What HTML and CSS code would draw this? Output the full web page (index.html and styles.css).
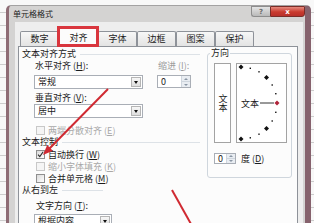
FILE: index.html
```html
<!DOCTYPE html>
<html lang="zh-CN">
<head>
<meta charset="utf-8">
<title>单元格格式</title>
<link rel="stylesheet" href="styles.css">
</head>
<body>
<div class="screen">
  <div class="sheet-left"></div>
  <div class="dialog">
    <div class="titlebar">
      <span class="title">单元格格式</span>
      <div class="caption">
        <span class="btn-help">?</span>
        <span class="btn-close">x</span>
      </div>
    </div>
    <div class="client">
      <div class="tabs">
        <span class="tab">数字</span>
        <span class="tab active">对齐</span>
        <span class="tab">字体</span>
        <span class="tab">边框</span>
        <span class="tab">图案</span>
        <span class="tab">保护</span>
      </div>
      <div class="page">
        <div class="left-col">
          <div class="head first">文本对齐方式</div>
          <div class="align-grid">
            <div class="lbl">水平对齐 (<u>H</u>):</div>
            <div class="lbl dim">缩进 (<u>I</u>):</div>
            <div class="combo"><span>常规</span><span class="arrow"></span></div>
            <div class="spin"><span class="val">0</span><span class="btns"><span class="up"></span><span class="down"></span></span></div>
            <div class="lbl lbl-v">垂直对齐 (<u>V</u>):</div>
            <div class="combo combo-v"><span>居中</span><span class="arrow"></span></div>
          </div>
          <div class="check-row disabled first"><span class="box"></span><span>两端分散对齐 (<u>E</u>)</span></div>
          <div class="head">文本控制</div>
          <div class="check-row"><span class="box checked"><svg viewBox="0 0 7 7" width="7" height="7"><path d="M1 3.6 L2.8 5.6 L6.2 0.8" fill="none" stroke="#2a2a2a" stroke-width="1.1"/></svg></span><span>自动换行 (<u>W</u>)</span></div>
          <div class="check-row disabled"><span class="box"></span><span>缩小字体填充 (<u>K</u>)</span></div>
          <div class="check-row"><span class="box"></span><span>合并单元格 (<u>M</u>)</span></div>
          <div class="head short">从右到左</div>
          <div class="lbl sub">文字方向 (<u>T</u>):</div>
          <div class="combo combo-dir"><span>根据内容</span><span class="arrow"></span></div>
        </div>
        <fieldset class="orient">
          <legend>方向</legend>
          <div class="orient-row">
            <div class="vtext"><span class="vword">文本</span></div>
            <div class="dial">
              <svg viewBox="0 0 49 78" width="49" height="78">
                <g fill="#111">
                  <polygon points="4,0.5 6.5,3 4,5.5 1.5,3"/>
                  <polygon points="29.5,11 32,13.5 29.5,16 27,13.5"/>
                  <polygon points="29.5,62 32,64.5 29.5,67 27,64.5"/>
                  <polygon points="4,72.5 6.5,75 4,77.5 1.5,75"/>
                  <rect x="12.6" y="3.6" width="1.4" height="1.4"/>
                  <rect x="21.3" y="7.1" width="1.4" height="1.4"/>
                  <rect x="34.5" y="20.3" width="1.4" height="1.4"/>
                  <rect x="38.1" y="29" width="1.4" height="1.4"/>
                  <rect x="38.1" y="47.6" width="1.4" height="1.4"/>
                  <rect x="34.5" y="56.3" width="1.4" height="1.4"/>
                  <rect x="21.3" y="69.5" width="1.4" height="1.4"/>
                  <rect x="12.6" y="73.1" width="1.4" height="1.4"/>
                </g>
                <polygon points="40,36.5 42.5,39 40,41.5 37.5,39" fill="#b0243a"/>
                <text x="4" y="42.5" font-size="9" fill="#1b1b1b" font-family="Noto Sans CJK SC, sans-serif">文本</text>
                <line x1="23" y1="39" x2="37" y2="39" stroke="#333" stroke-width="1"/>
              </svg>
            </div>
          </div>
          <div class="degree-row">
            <div class="spin spin-deg"><span class="val">0</span><span class="btns"><span class="up"></span><span class="down"></span></span></div>
            <span>度 (<u>D</u>)</span>
          </div>
        </fieldset>
      </div>
    </div>
  </div>
  <div class="tab-highlight"></div>
  <svg class="marks" viewBox="0 0 314 223" width="314" height="223">
    <line x1="108" y1="89" x2="49" y2="149" stroke="#d02a32" stroke-width="2"/>
    <polygon points="43,155 52.8,150.7 47.2,145.1" fill="#d02a32"/>
    <line x1="172" y1="190" x2="191" y2="224" stroke="#d02a32" stroke-width="2"/>
  </svg>
</div>
</body>
</html>
```

FILE: styles.css
```css
* { box-sizing: border-box; }
html, body { margin: 0; padding: 0; }
body {
  width: 314px;
  height: 223px;
  overflow: hidden;
  font-family: "Noto Sans CJK SC", "Noto Sans", sans-serif;
  font-size: 9px;
  color: #1b1b1b;
}
u { text-decoration: underline; }

.screen {
  position: relative;
  width: 314px;
  height: 223px;
  display: flex;
  overflow: hidden;
  background: repeating-linear-gradient(to bottom, #f8f8f8 0 12px, #cdcdcd 12px 13px);
}
.sheet-left { width: 6px; flex: none; }

.dialog {
  flex: none;
  width: 305px;
  height: 218px;
  margin-top: 5px;
  display: flex;
  flex-direction: column;
  background: #d4d3d2;
  border-left: 3px solid #8e6c75;
  border-right: 6px solid #86626d;
  border-top: 1px solid #a3a2a2;
  border-radius: 5px 5px 0 0;
}

.titlebar {
  height: 16px;
  flex: none;
  display: flex;
  align-items: flex-start;
  justify-content: space-between;
  padding-left: 4px;
}
.title { font-size: 8px; line-height: 15px; color: #222; }
.caption { display: flex; }
.btn-help, .btn-close {
  height: 11px;
  display: flex;
  align-items: center;
  justify-content: center;
  font-family: "DejaVu Sans", sans-serif;
  font-weight: bold;
  font-size: 7px;
}
.btn-help {
  width: 19px;
  color: #6a6a6a;
  background: linear-gradient(#e4e4e4, #b9b9b9);
  border: 1px solid #8d8d8d;
  border-right: none;
  border-radius: 0 0 0 3px;
}
.btn-close {
  width: 35px;
  color: #fff;
  background: linear-gradient(#e58a7e, #c93a2e 55%, #b8302a);
  border: 1px solid #7a2d28;
  border-radius: 0 0 3px 0;
}

.client {
  flex: 1;
  margin: 0 2px 0 6px;
  background: #eeeeee;
  display: flex;
  flex-direction: column;
}

.tabs {
  height: 24px;
  flex: none;
  display: flex;
  align-items: flex-end;
  padding-left: 5px;
}
.tab {
  width: 39px;
  height: 15px;
  border: 1px solid #8e9299;
  border-bottom: none;
  border-radius: 2px 2px 0 0;
  background: linear-gradient(#f7f7f7, #e3e3e3);
  text-align: center;
  line-height: 14px;
  color: #1b1b1b;
}
.tab.active {
  position: relative;
  z-index: 1;
  width: 41px;
  height: 19px;
  margin: 0 -1px -1px -1px;
  background: #fcfcfc;
  line-height: 17px;
}

.page {
  flex: 1;
  margin: 0 5px 0 3px;
  background: #fcfcfc;
  border: 1px solid #8e9299;
  border-bottom: none;
  display: flex;
  padding-left: 3px;
}

.left-col { width: 185px; flex: none; }

.head {
  display: flex;
  align-items: center;
  height: 12px;
  line-height: 12px;
  white-space: nowrap;
}
.head::after {
  content: "";
  flex: 1;
  height: 1px;
  background: #dde2e7;
  margin: 0 7px 0 4px;
}
.head.first { margin-top: 1px; }
.head.short { width: 88px; }

.align-grid {
  display: grid;
  grid-template-columns: 109px 34px;
  column-gap: 14px;
  margin-left: 12px;
}
.lbl {
  height: 12px;
  line-height: 12px;
  padding-left: 1px;
  white-space: nowrap;
}
.dim { color: #9c9c9c; }
.lbl-v { grid-column: 1; margin-top: 3px; }
.lbl.sub { margin: 4px 0 0 13px; }

.combo {
  height: 14px;
  margin-top: 3px;
  display: flex;
  align-items: center;
  justify-content: space-between;
  border: 1px solid #a9aeb6;
  background: #fff;
  padding-left: 3px;
  line-height: 12px;
}
.combo-v { grid-column: 1; margin-top: 0; }
.combo-dir { width: 78px; margin: 2px 0 0 12px; }
.arrow {
  width: 10px;
  height: 10px;
  margin-right: 1px;
  border: 1px solid #b5b5b5;
  background: linear-gradient(#f7f7f7, #dedede);
  display: flex;
  align-items: center;
  justify-content: center;
}
.arrow::before {
  content: "";
  border-left: 2.5px solid transparent;
  border-right: 2.5px solid transparent;
  border-top: 3px solid #111;
}

.spin {
  height: 13px;
  margin-top: 3px;
  display: flex;
  border: 1px solid #a9aeb6;
  background: #fff;
}
.spin .val { flex: 1; padding-left: 3px; line-height: 11px; }
.spin .btns {
  width: 9px;
  display: flex;
  flex-direction: column;
  border-left: 1px solid #cfd6de;
}
.spin .up, .spin .down {
  flex: 1;
  display: flex;
  align-items: center;
  justify-content: center;
  background: #e9edf2;
}
.spin .up { border-bottom: 1px solid #cfd6de; }
.spin .up::before {
  content: "";
  border-left: 2px solid transparent;
  border-right: 2px solid transparent;
  border-bottom: 2px solid #8a96a4;
}
.spin .down::before {
  content: "";
  border-left: 2px solid transparent;
  border-right: 2px solid transparent;
  border-top: 2px solid #8a96a4;
}
.spin-deg { width: 22px; height: 11px; margin-top: 0; }
.spin-deg .val { line-height: 9px; }

.check-row {
  display: flex;
  align-items: center;
  gap: 3px;
  height: 12px;
  margin-left: 14px;
  white-space: nowrap;
}
.check-row.first { margin-top: 6px; }
.box {
  width: 9px;
  height: 9px;
  flex: none;
  border: 1px solid #8f8f8f;
  background: linear-gradient(135deg, #dadada, #ffffff);
  display: flex;
  align-items: center;
  justify-content: center;
}
.check-row.disabled { color: #a8a8a8; }
.check-row.disabled .box { border-color: #c8c8c8; background: #f5f5f5; }

.orient {
  width: 85px;
  height: 131px;
  margin: 0;
  padding: 0 4px 0 2px;
  border: 1px solid #cfd6dd;
  border-radius: 3px;
  min-width: 0;
}
.orient legend {
  padding: 0 1px;
  line-height: 12px;
  font-size: 9px;
}
.orient-row {
  display: flex;
  gap: 5px;
  margin: 4px 0 0 4px;
}
.vtext {
  width: 17px;
  height: 80px;
  border: 1px solid #a3a3a3;
  background: #fff;
  display: flex;
  align-items: center;
  justify-content: center;
}
.vword {
  writing-mode: vertical-rl;
  text-orientation: upright;
  line-height: 10px;
}
.dial {
  width: 51px;
  height: 80px;
  border: 1px solid #a3a3a3;
  background: #fff;
}
.dial svg { display: block; }
.degree-row {
  display: flex;
  align-items: center;
  gap: 5px;
  margin: 10px 0 0 4px;
  line-height: 11px;
}

.tab-highlight {
  position: absolute;
  left: 57px;
  top: 26px;
  width: 42px;
  height: 21px;
  border: 3px solid #d9363e;
  z-index: 3;
}
.marks {
  position: absolute;
  left: 0;
  top: 0;
  z-index: 4;
  pointer-events: none;
}
```
